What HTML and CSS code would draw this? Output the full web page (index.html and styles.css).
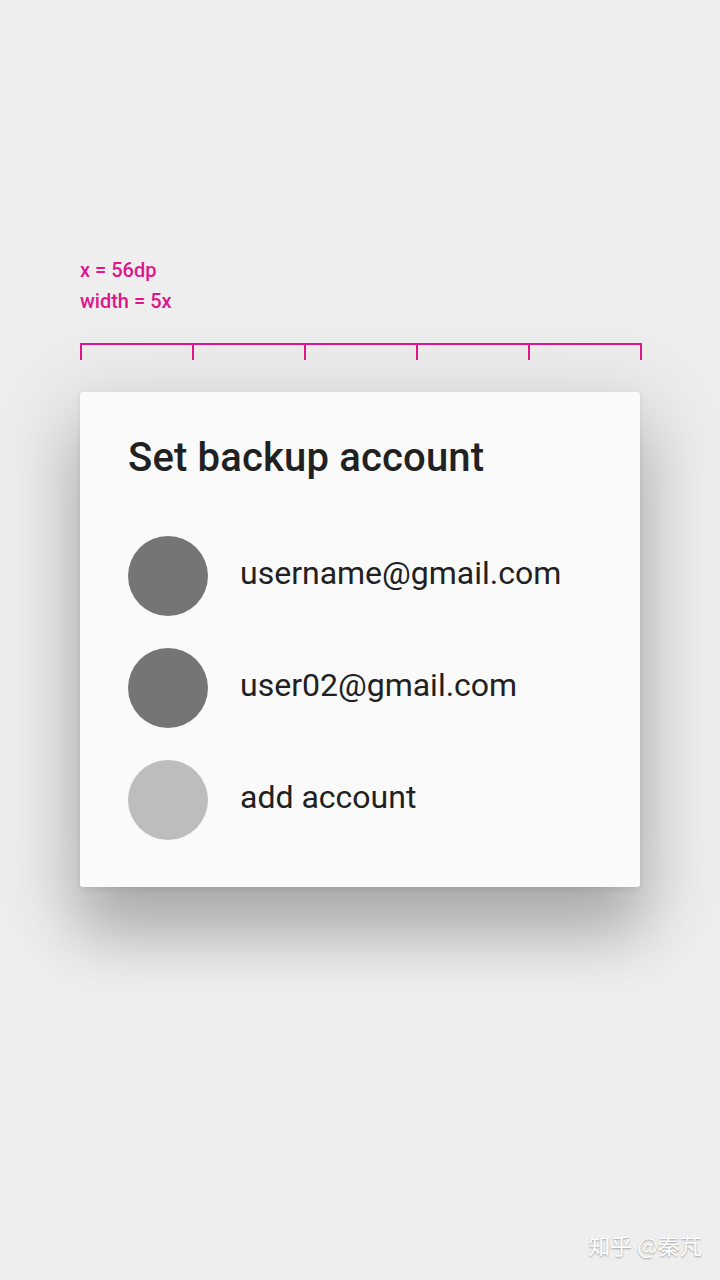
FILE: index.html
```html
<!DOCTYPE html>
<html>
<head>
<meta charset="utf-8">
<link rel="stylesheet" href="styles.css">
</head>
<body>
<main class="page">
  <div class="notes">
    <div class="note">x = 56dp</div>
    <div class="note">width = 5x</div>
  </div>
  <div class="ruler">
    <span class="seg"></span><span class="seg"></span><span class="seg"></span><span class="seg"></span><span class="seg last"></span>
  </div>
  <section class="dialog">
    <h1 class="title">Set backup account</h1>
    <ul class="list">
      <li class="row"><span class="avatar dark"></span><span class="label">username@gmail.com</span></li>
      <li class="row"><span class="avatar dark"></span><span class="label">user02@gmail.com</span></li>
      <li class="row"><span class="avatar light"></span><span class="label">add account</span></li>
    </ul>
  </section>
</main>
<div class="watermark">知乎 @秦芃</div>
</body>
</html>
```

FILE: styles.css
```css
html, body {
  margin: 0;
  padding: 0;
  background: #eeeeee;
  width: 720px;
  height: 1280px;
  overflow: hidden;
  font-family: Roboto, "Noto Sans", sans-serif;
}
.page {
  padding: 255px 0 0 80px;
}
.notes {
  display: flex;
  flex-direction: column;
}
.note {
  color: #e0158c;
  font-size: 20px;
  font-weight: 500;
  line-height: 31px;
}
.ruler {
  display: flex;
  width: 562px;
  margin-top: 26px;
}
.seg {
  width: 110px;
  height: 15px;
  border-top: 2px solid #e0158c;
  border-left: 2px solid #e0158c;
}
.seg.last {
  border-right: 2px solid #e0158c;
}
.dialog {
  width: 560px;
  box-sizing: border-box;
  margin-top: 32px;
  background: #fafafa;
  border-radius: 3px;
  padding: 42px 48px 47px;
  box-shadow:
    0 46px 60px 0 rgba(0, 0, 0, 0.22),
    0 18px 90px 20px rgba(0, 0, 0, 0.10),
    0 2px 6px rgba(0, 0, 0, 0.08);
}
.title {
  margin: 0;
  font-size: 40px;
  line-height: 48px;
  font-weight: 500;
  letter-spacing: 0.17px;
  color: #212121;
}
.list {
  list-style: none;
  margin: 54px 0 0;
  padding: 0;
  display: flex;
  flex-direction: column;
  gap: 32px;
}
.row {
  display: flex;
  align-items: center;
  gap: 32px;
  height: 80px;
}
.avatar {
  width: 80px;
  height: 80px;
  border-radius: 50%;
  flex: none;
}
.avatar.dark { background: #757575; }
.avatar.light { background: #bdbdbd; }
.label {
  font-size: 32px;
  line-height: 40px;
  color: #212121;
  margin-top: -6px;
}
.watermark {
  position: absolute;
  right: 18px;
  bottom: 20px;
  color: #ffffff;
  font-size: 22px;
  font-family: "Noto Sans CJK SC", "Noto Sans", sans-serif;
  text-shadow: 0 1px 2px rgba(0, 0, 0, 0.35);
}
```
